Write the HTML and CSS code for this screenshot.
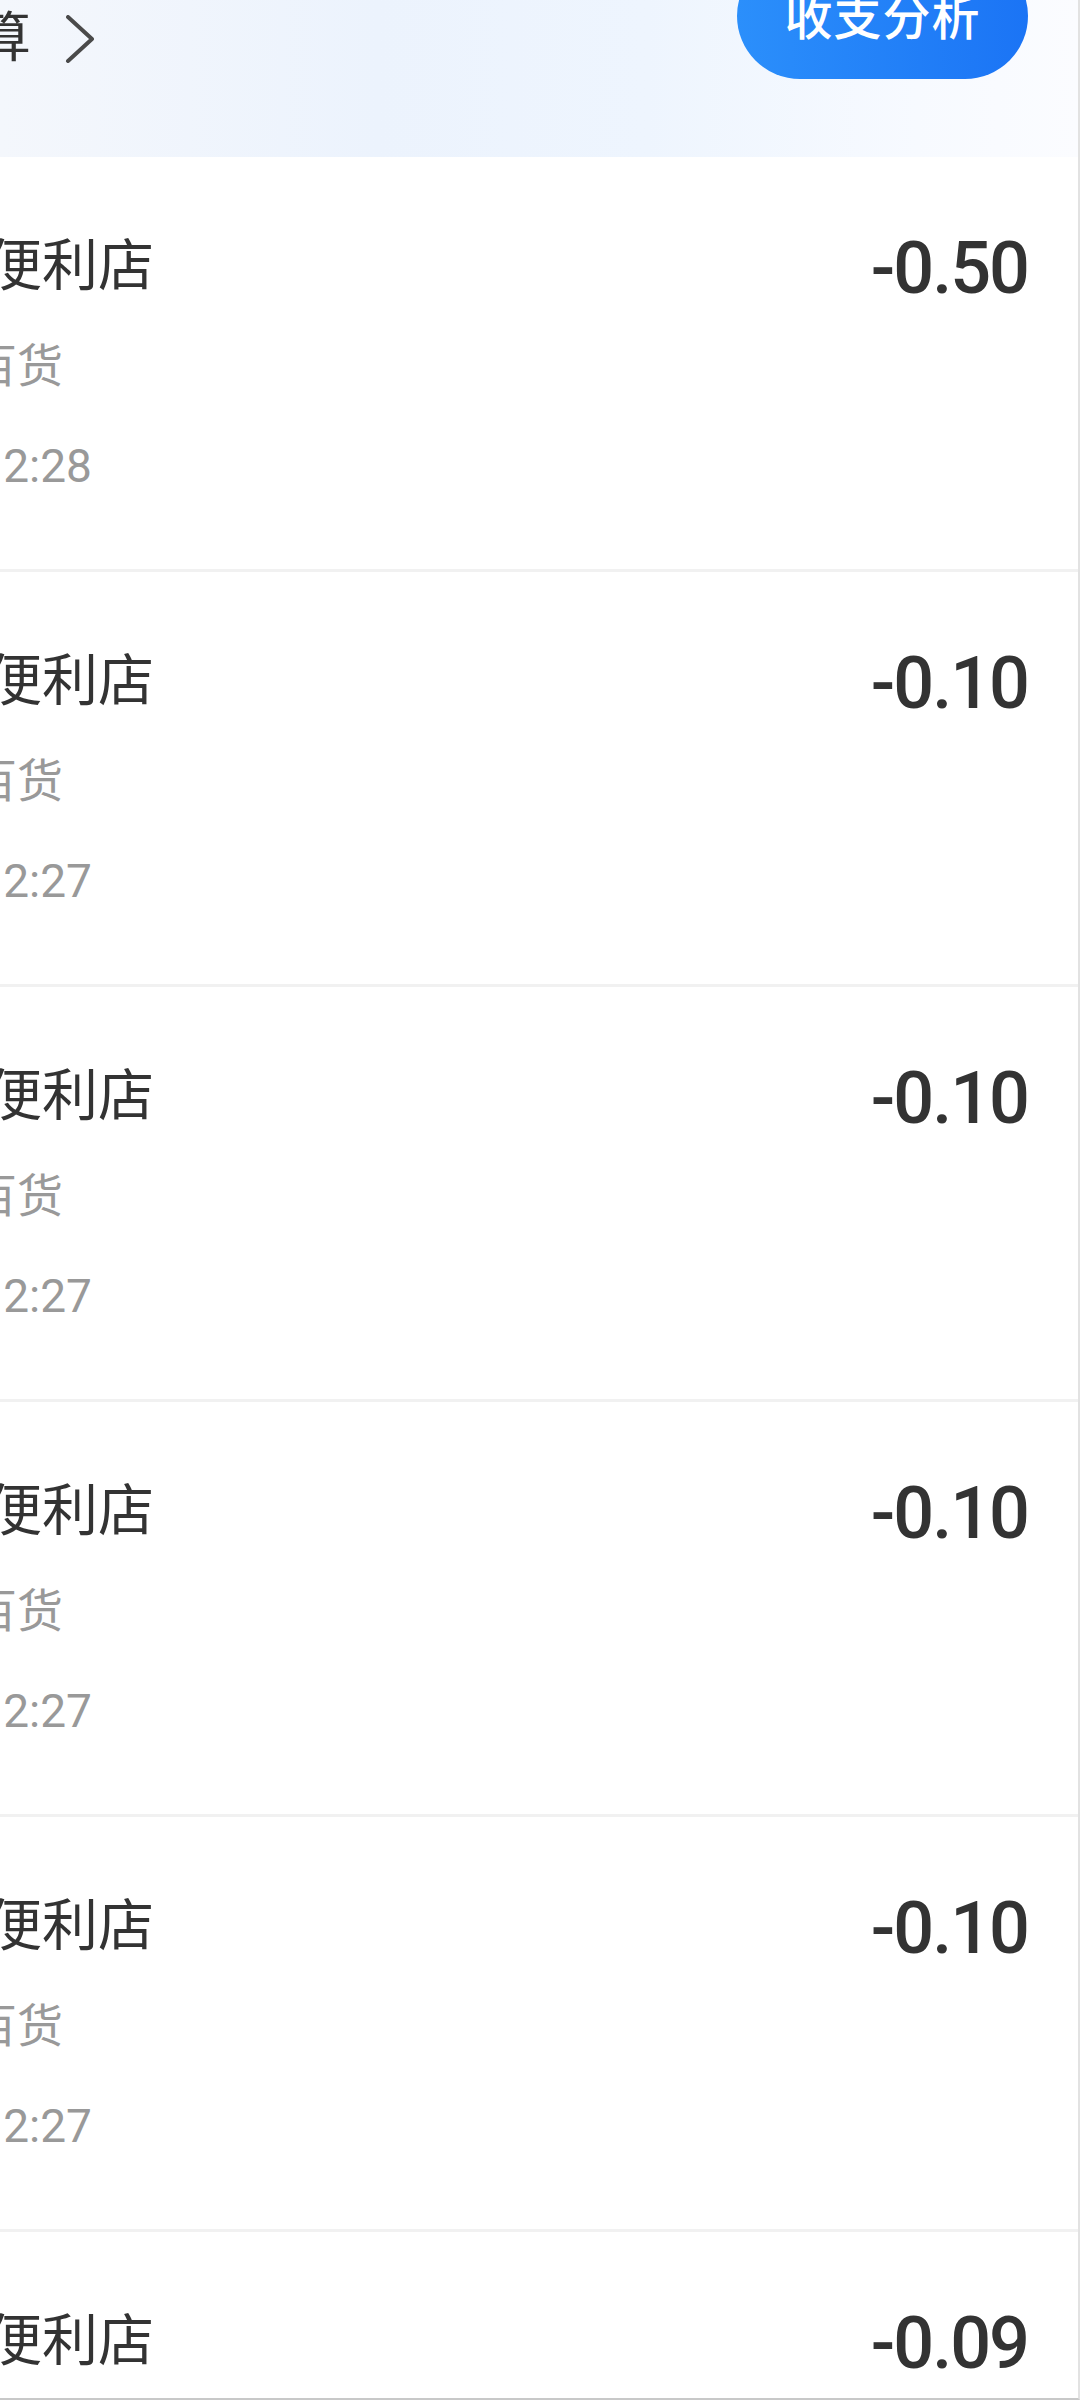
FILE: index.html
```html
<!DOCTYPE html>
<html lang="zh-CN">
<head>
    <meta charset="UTF-8">
    <meta name="viewport" content="width=device-width, initial-scale=1.0">
    <title>账单</title>
    <link rel="stylesheet" href="styles.css">
</head>
<body>
    <div class="page">
        <div class="summary">
            <div class="budget">
                <span>设置预算</span>
                <svg class="chevron" width="30" height="48" viewBox="0 0 30 48">
                    <path d="M3 2 L27 24 L3 46" fill="none" stroke="#4a4a4a" stroke-width="4" stroke-linecap="round" stroke-linejoin="round"/>
                </svg>
            </div>
            <button class="analysis-btn">收支分析</button>
        </div>

        <div class="bill">
            <div class="bill-info">
                <div class="bill-title">罗森便利店</div>
                <div class="bill-sub">日用百货</div>
                <div class="bill-time">今天 12:28</div>
            </div>
            <div class="bill-amount">-0.50</div>
        </div>
        <div class="bill">
            <div class="bill-info">
                <div class="bill-title">罗森便利店</div>
                <div class="bill-sub">日用百货</div>
                <div class="bill-time">今天 12:27</div>
            </div>
            <div class="bill-amount">-0.10</div>
        </div>
        <div class="bill">
            <div class="bill-info">
                <div class="bill-title">罗森便利店</div>
                <div class="bill-sub">日用百货</div>
                <div class="bill-time">今天 12:27</div>
            </div>
            <div class="bill-amount">-0.10</div>
        </div>
        <div class="bill">
            <div class="bill-info">
                <div class="bill-title">罗森便利店</div>
                <div class="bill-sub">日用百货</div>
                <div class="bill-time">今天 12:27</div>
            </div>
            <div class="bill-amount">-0.10</div>
        </div>
        <div class="bill">
            <div class="bill-info">
                <div class="bill-title">罗森便利店</div>
                <div class="bill-sub">日用百货</div>
                <div class="bill-time">今天 12:27</div>
            </div>
            <div class="bill-amount">-0.10</div>
        </div>
        <div class="bill">
            <div class="bill-info">
                <div class="bill-title">罗森便利店</div>
                <div class="bill-sub">日用百货</div>
                <div class="bill-time">今天 12:26</div>
            </div>
            <div class="bill-amount">-0.09</div>
        </div>
    </div>
</body>
</html>
```

FILE: styles.css
```css
* {
    margin: 0;
    padding: 0;
    box-sizing: border-box;
    font-family: Roboto, "Noto Sans CJK SC", sans-serif;
}

body {
    margin: 0;
    background: #fff;
}

.page {
    width: 1080px;
    height: 2400px;
    overflow: hidden;
    border-right: 2px solid #e2e2e2;
    border-bottom: 2px solid #c8c8c8;
    background: #fff;
}

.summary {
    height: 157px;
    display: flex;
    justify-content: space-between;
    align-items: flex-start;
    padding-right: 50px;
    background: linear-gradient(90deg, #f4f7fc 0%, #ecf3fd 35%, #eef5fe 60%, #f7faff 85%, #fbfcff 100%);
}

.budget {
    display: flex;
    align-items: center;
    gap: 34px;
    margin-left: -185px;
    margin-top: 12px;
    font-size: 54px;
    line-height: 54px;
    color: #333;
}

.chevron {
    display: block;
}

.analysis-btn {
    margin-top: -47px;
    width: 291px;
    height: 126px;
    border: none;
    border-radius: 63px;
    padding-bottom: 4px;
    background: linear-gradient(90deg, #2b8ffb, #1b74f5);
    color: #fff;
    font-size: 48px;
    font-weight: 500;
    letter-spacing: 1px;
}

.bill {
    display: flex;
    justify-content: space-between;
    align-items: flex-start;
    padding: 59px 52px 53px 0;
    border-bottom: 3px solid #f1f1f1;
}

.bill-info {
    margin-left: -126px;
}

.bill-title {
    font-size: 56px;
    line-height: 100px;
    color: #333;
}

.bill-sub,
.bill-time {
    font-size: 46px;
    line-height: 100px;
    color: #999;
}

.bill-sub {
    margin-left: 5px;
}

.bill-amount {
    margin-right: -2px;
    padding-top: 3px;
    font-size: 72px;
    font-weight: 500;
    letter-spacing: -2px;
    line-height: 100px;
    color: #333;
}
```
